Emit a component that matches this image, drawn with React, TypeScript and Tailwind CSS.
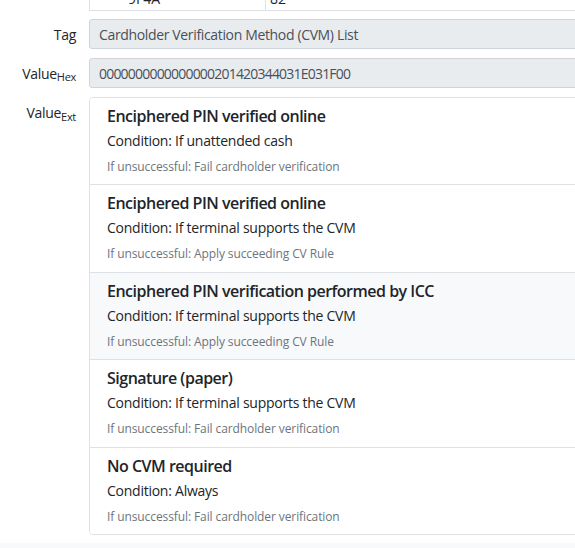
// App.tsx — CVM list detail view (tag / hex / extended value)

type CvmRule = {
  method: string;
  condition: string;
  onFail: string;
  highlight?: boolean;
  height: string;
};

const RULES: CvmRule[] = [
  { method: "Enciphered PIN verified online", condition: "If unattended cash", onFail: "Fail cardholder verification", height: "h-[87px]" },
  { method: "Enciphered PIN verified online", condition: "If terminal supports the CVM", onFail: "Apply succeeding CV Rule", height: "h-[88px]" },
  { method: "Enciphered PIN verification performed by ICC", condition: "If terminal supports the CVM", onFail: "Apply succeeding CV Rule", highlight: true, height: "h-[87px]" },
  { method: "Signature (paper)", condition: "If terminal supports the CVM", onFail: "Fail cardholder verification", height: "h-[88px]" },
  { method: "No CVM required", condition: "Always", onFail: "Fail cardholder verification", height: "h-[86px]" },
];

const FONT = "font-['Open_Sans',sans-serif]";

// ─── Form label ───────────────────────────────────────────────────────────────

function Label({ name, sub, top }: { name: string; sub?: string; top?: boolean }) {
  return (
    <div
      className={`w-[89px] flex-shrink-0 pr-[13px] pt-[1px] text-right text-[14px] leading-[20px] tracking-[-0.3px] text-[#212529] ${
        top ? "pt-[6px]" : "self-center"
      }`}
    >
      {name}
      {sub && <sub className="text-[11px]">{sub}</sub>}
    </div>
  );
}

function ReadonlyInput({ value, tight }: { value: string; tight?: boolean }) {
  return (
    <div
      className={`flex-1 h-[30px] flex items-center pl-[9px] pt-[1px] bg-[#e9ecef] border border-[#ced4da] rounded-l-[3px] text-[14px] text-[#495057] ${
        tight ? "tracking-[-0.8px]" : "tracking-[-0.35px]"
      }`}
    >
      {value}
    </div>
  );
}

// ─── Rule item ────────────────────────────────────────────────────────────────

function RuleItem({ rule, last }: { rule: CvmRule; last: boolean }) {
  return (
    <div
      className={`${rule.height} pl-[17px] pt-[7px] ${rule.highlight ? "bg-[#f8f9fa]" : "bg-white"} ${
        last ? "" : "border-b border-[#dee2e6]"
      }`}
    >
      <div className="text-[16px] leading-[22px] font-semibold tracking-[-0.5px] text-[#212529]">{rule.method}</div>
      <div className="mt-[4px] text-[14px] leading-[20px] tracking-[-0.25px] text-[#212529]">
        Condition: {rule.condition}
      </div>
      <div className="mt-[8px] text-[12px] leading-[16px] tracking-[-0.1px] text-[#6c757d]">
        If unsuccessful: {rule.onFail}
      </div>
    </div>
  );
}

export default function App() {
  return (
    <div className={`w-[575px] h-[548px] overflow-hidden bg-white ${FONT}`}>
      <div className="w-[620px] flex flex-col">
        {/* Tail of the table above */}
        <div className="flex h-[11px]">
          <div className="w-[89px] flex-shrink-0" />
          <div className="flex-1 flex border-l border-b border-[#dee2e6] overflow-hidden text-[14px] leading-[20px] text-[#212529]">
            <div className="w-[176px] flex-shrink-0 border-r border-[#dee2e6] pl-[38px]">
              <div className="-mt-[11px]">9F4A</div>
            </div>
            <div className="pl-[4px]">
              <div className="-mt-[11px]">82</div>
            </div>
          </div>
        </div>

        <div className="flex mt-[8px]">
          <Label name="Tag" />
          <ReadonlyInput value="Cardholder Verification Method (CVM) List" />
        </div>

        <div className="flex mt-[9px]">
          <Label name="Value" sub="Hex" />
          <ReadonlyInput value="0000000000000000201420344031E031F00" tight />
        </div>

        <div className="flex mt-[9px]">
          <Label name="Value" sub="Ext" top />
          <div className="flex-1 border border-[#dee2e6] rounded-l-[4px] overflow-hidden">
            {RULES.map((r, i) => (
              <RuleItem key={i} rule={r} last={i === RULES.length - 1} />
            ))}
          </div>
        </div>

        <div className="mt-[8px] h-[10px] bg-[#f8f9fa]" />
      </div>
    </div>
  );
}
